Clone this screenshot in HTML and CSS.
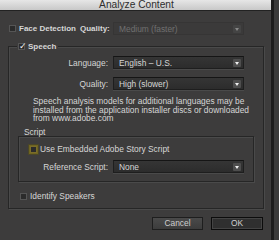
FILE: index.html
```html
<!DOCTYPE html>
<html>
<head>
<meta charset="utf-8">
<link rel="stylesheet" href="styles.css">
</head>
<body>
<div class="window">
  <div class="titlebar">Analyze Content</div>
  <div class="content">
    <div class="row face">
      <div class="check-label bold"><span class="box"></span>Face Detection</div>
      <span class="label bold">Quality:</span>
      <div class="select disabled"><span>Medium (faster)</span><i class="arrow"></i></div>
    </div>

    <div class="group speech">
      <div class="legend check-label bold"><span class="box checked">✓</span>Speech</div>
      <div class="row">
        <span class="label">Language:</span>
        <div class="select"><span>English – U.S.</span><i class="arrow"></i></div>
      </div>
      <div class="row">
        <span class="label">Quality:</span>
        <div class="select"><span>High (slower)</span><i class="arrow"></i></div>
      </div>
      <p class="note">Speech analysis models for additional languages may be installed from the application installer discs or downloaded from www.adobe.com</p>

      <div class="script-title">Script</div>
      <div class="group script">
        <div class="check-label"><span class="box focus"></span>Use Embedded Adobe Story Script</div>
        <div class="row">
          <span class="label">Reference Script:</span>
          <div class="select"><span>None</span><i class="arrow"></i></div>
        </div>
      </div>
      <div class="check-label speakers"><span class="box"></span>Identify Speakers</div>
    </div>

    <div class="buttons">
      <div class="btn cancel">Cancel</div>
      <div class="btn ok">OK</div>
    </div>
  </div>
</div>
</body>
</html>
```

FILE: styles.css
```css
* { box-sizing: border-box; }
html, body { margin: 0; padding: 0; }
body {
  width: 279px;
  height: 240px;
  overflow: hidden;
  background: #3a3a3a;
  font-family: "Liberation Sans", Arial, sans-serif;
  font-size: 8.4px;
  color: #d6d6d6;
}
.window {
  width: 274px;
  height: 240px;
  background: #3d3c3c;
  border-right: 3px solid #1c1c1c;
}
.titlebar {
  height: 11px;
  background: linear-gradient(#e6e6e6, #c8c8c8);
  color: #2e2e2e;
  font-size: 10.2px;
  line-height: 10px;
  text-align: center;
  padding-left: 2px;
  border-bottom: 1px solid #222;
}
.content {
  padding: 11px 0 0 0;
}
.row {
  display: flex;
  align-items: center;
  height: 13px;
}
.label {
  width: 104px;
  text-align: right;
  padding-right: 5px;
  flex: none;
}
.bold { font-weight: bold; font-size: 8px; }
.face { margin-left: 9px; }
.face .check-label { width: 71px; }
.face .label { width: 33px; }
.select {
  width: 131px;
  height: 13px;
  border: 1px solid #1e1e1e;
  border-top-color: #151515;
  background: linear-gradient(#353535, #2c2c2c);
  display: flex;
  align-items: center;
  justify-content: space-between;
  padding: 0 2px 0 5px;
  color: #d6d6d6;
  box-shadow: 0 1px 0 #4a4a4a;
}
.select.disabled {
  background: #3b3a3a;
  border-color: #363535;
  box-shadow: none;
  color: #707070;
}
.arrow {
  width: 8px;
  height: 8px;
  background: #4e4e4e;
  position: relative;
  border-radius: 1px;
}
.arrow::after {
  content: "";
  position: absolute;
  left: 2px;
  top: 3px;
  border-left: 2px solid transparent;
  border-right: 2px solid transparent;
  border-top: 3px solid #f0f0f0;
}
.select.disabled .arrow { background: #444; }
.select.disabled .arrow::after { border-top-color: #888; }

.check-label {
  display: flex;
  align-items: center;
  white-space: nowrap;
}
.box {
  width: 7px;
  height: 7px;
  border: 1px solid #555;
  background: #2b2b2b;
  margin-right: 3px;
  position: relative;
  flex: none;
  font-size: 9px;
  line-height: 5px;
  color: #f4f4f4;
  overflow: visible;
}
.box.checked { font-weight: normal; }
.box.focus {
  box-shadow: 0 0 0 1px #6f6420, 0 0 0 2px #4a4628;
  border-color: #7a6d2a;
}

.group {
  border: 1px solid #262626;
  box-shadow: inset 1px 1px 0 #4a4a4a, 1px 1px 0 #4a4a4a;
}
.speech {
  margin: 11px 0 0 8px;
  width: 256px;
  height: 163px;
  padding: 9px 0 0 0;
  position: relative;
}
.legend {
  position: absolute;
  top: -5px;
  left: 8px;
  background: #3d3c3c;
  padding: 0 2px 0 1px;
}
.speech .row + .row { margin-top: 8px; }
.note {
  margin: 7px 0 0 24px;
  line-height: 8.7px;
  width: 226px;
}
.script-title {
  margin: 5px 0 0 15px;
  line-height: 8px;
}
.script {
  margin: 0 0 0 9px;
  width: 236px;
  height: 46px;
  padding: 7px 0 0 11px;
}
.script .row { margin: 6px 0 0 -11px; }
.script .row .label { width: 94px; }
.speakers { margin: 9px 0 0 11px; }

.buttons {
  display: flex;
  gap: 8px;
  margin: 8px 0 0 152px;
}
.btn {
  width: 51px;
  height: 13px;
  line-height: 11px;
  text-align: center;
  color: #cfcfcf;
  border: 1px solid #1e1e1e;
}
.cancel {
  background: linear-gradient(#4a4a4a, #3c3c3c);
}
.ok {
  width: 52px;
  background: #2f2f2f;
  border: 1px solid #0c0c0c;
  box-shadow: inset 0 0 0 1px #444;
}
```
